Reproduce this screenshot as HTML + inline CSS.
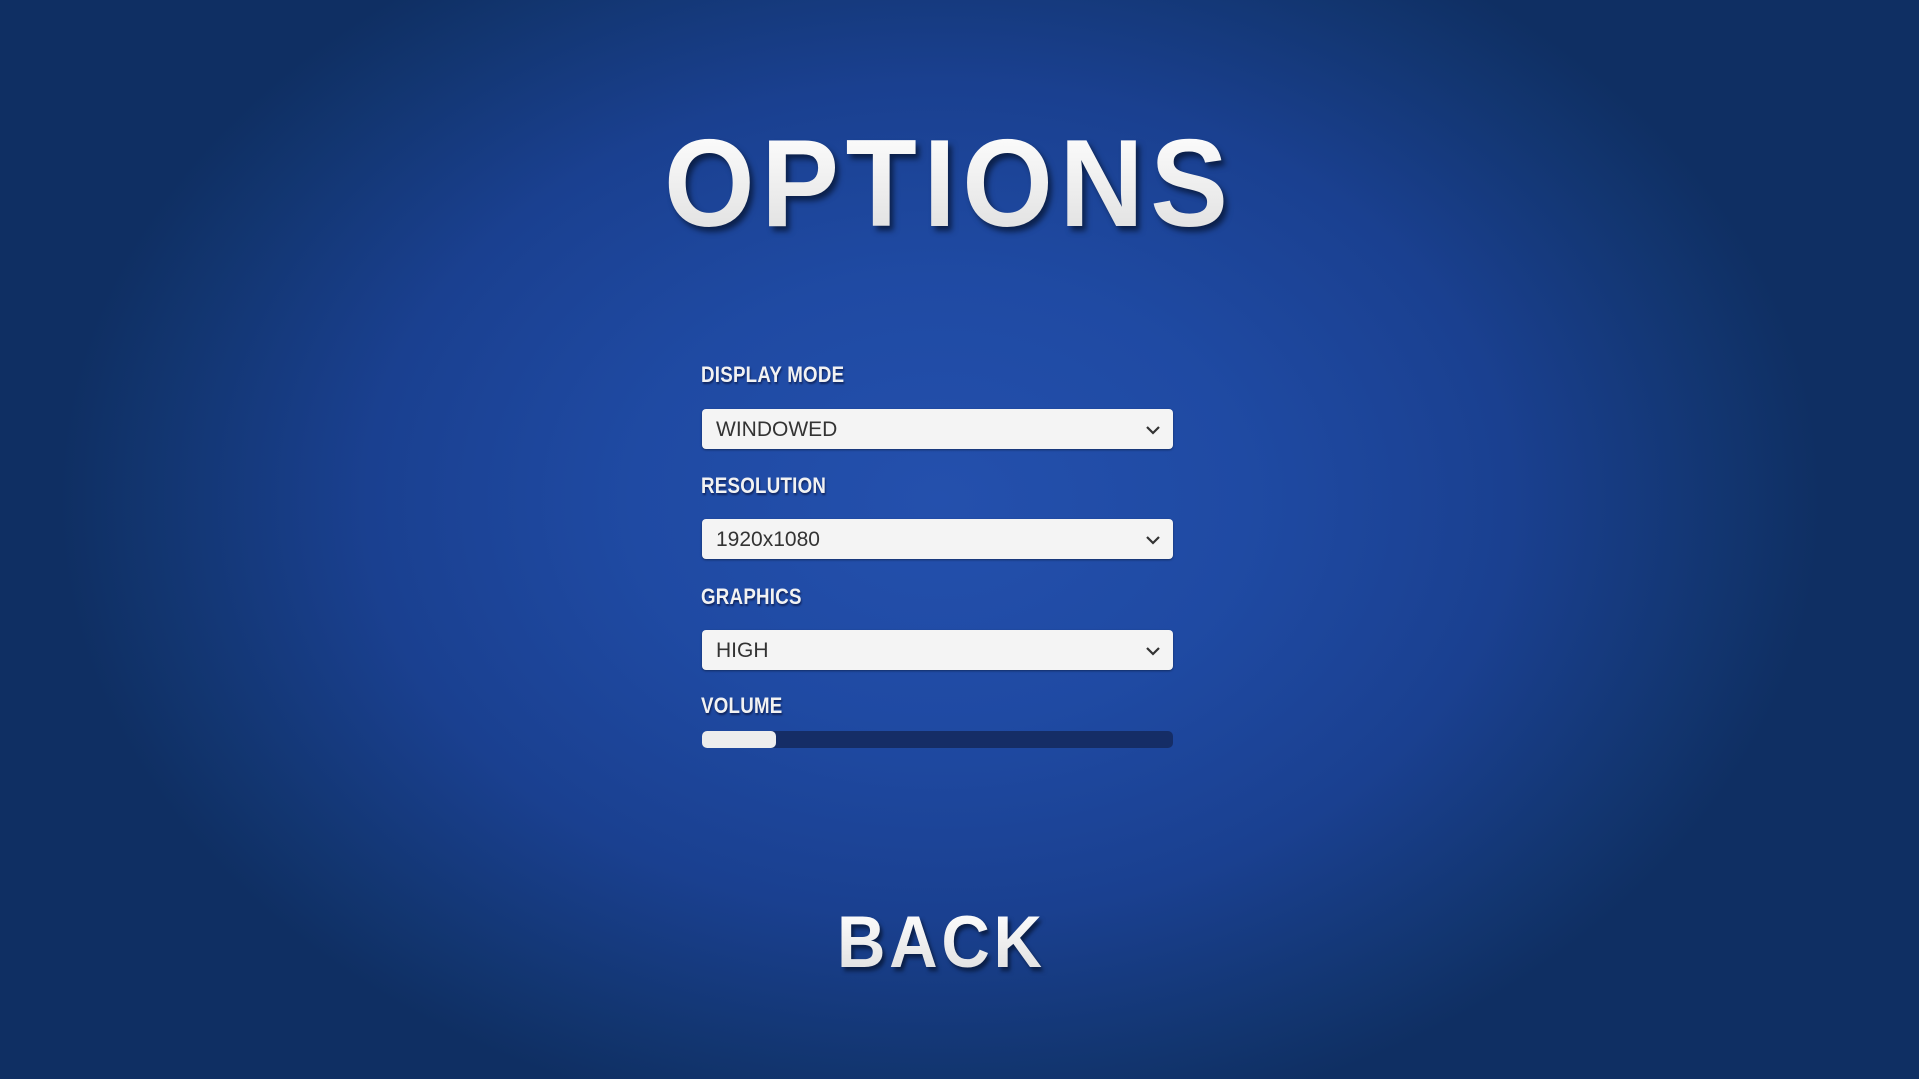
<!DOCTYPE html>
<html><head><meta charset="utf-8"><style>
html,body{margin:0;padding:0;}
body{width:1919px;height:1079px;overflow:hidden;position:relative;
background:radial-gradient(ellipse 880px 640px at 940px 500px,#2450ad 0%,#1f4aa3 35%,#1a4090 65%,#12356f 90%,#0f2f63 100%);
font-family:"Liberation Sans",sans-serif;}
.t{position:absolute;color:#f2f2f2;font-weight:bold;white-space:nowrap;transform-origin:left top;}
.title{left:664px;top:122px;font-size:124px;line-height:124px;letter-spacing:7px;transform:scaleX(0.94);
background:linear-gradient(#ffffff,#dedede);-webkit-background-clip:text;background-clip:text;color:transparent;
filter:drop-shadow(4px 5px 3px rgba(5,20,50,0.75));}
.lbl{left:701px;font-size:22px;line-height:22px;letter-spacing:0.3px;transform:scaleX(0.85);text-shadow:1px 2px 2px rgba(0,0,30,0.5);}
.dd{position:absolute;left:702px;width:471px;height:40px;background:#f4f4f4;border-radius:4px;box-shadow:0 1px 2px rgba(0,0,0,0.4);}
.dd span{position:absolute;left:14px;top:10px;font-size:21px;line-height:21px;color:#333;}
.dd svg{position:absolute;left:443px;top:16px;}
.track{position:absolute;left:702px;top:731px;width:471px;height:17px;background:#152d66;border-radius:5px;}
.thumb{position:absolute;left:702px;top:731px;width:74px;height:17px;background:#ededed;border-radius:5px;}
.back{left:837px;top:906px;font-size:73px;line-height:73px;letter-spacing:4px;transform:scaleX(0.92);
background:linear-gradient(#ffffff,#dedede);-webkit-background-clip:text;background-clip:text;color:transparent;
filter:drop-shadow(3px 4px 2px rgba(5,20,50,0.75));}
</style></head><body>
<div class="t title">OPTIONS</div>
<div class="t lbl" style="top:364px">DISPLAY MODE</div>
<div class="dd" style="top:409px"><span>WINDOWED</span><svg width="16" height="10" viewBox="0 0 16 10"><path d="M2 2 L8 8 L14 2" fill="none" stroke="#333" stroke-width="2.2"/></svg></div>
<div class="t lbl" style="top:475px">RESOLUTION</div>
<div class="dd" style="top:519px"><span>1920x1080</span><svg width="16" height="10" viewBox="0 0 16 10"><path d="M2 2 L8 8 L14 2" fill="none" stroke="#333" stroke-width="2.2"/></svg></div>
<div class="t lbl" style="top:586px">GRAPHICS</div>
<div class="dd" style="top:630px"><span>HIGH</span><svg width="16" height="10" viewBox="0 0 16 10"><path d="M2 2 L8 8 L14 2" fill="none" stroke="#333" stroke-width="2.2"/></svg></div>
<div class="t lbl" style="top:695px">VOLUME</div>
<div class="track"></div><div class="thumb"></div>
<div class="t back">BACK</div>
</body></html>
